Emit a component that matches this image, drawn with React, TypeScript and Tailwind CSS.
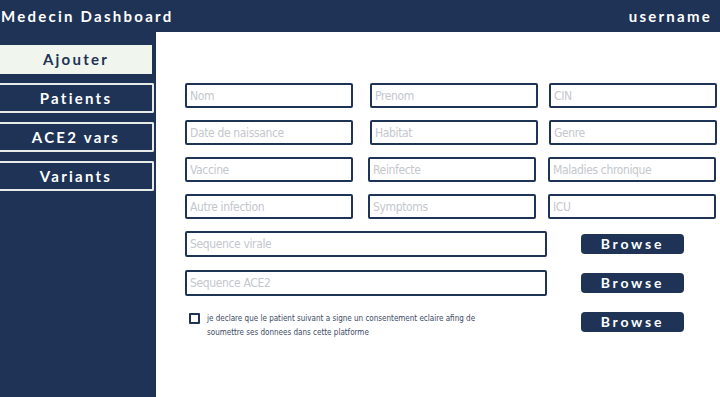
import { useState } from 'react'

const NAV = ['Patients', 'ACE2 vars', 'Variants']

const ROWS = [
  ['Nom', 'Prenom', 'CIN'],
  ['Date de naissance', 'Habitat', 'Genre'],
  ['Vaccine', 'Reinfecte', 'Maladies chronique'],
  ['Autre infection', 'Symptoms', 'ICU'],
]

const head = { fontFamily: 'Lato, "Open Sans", sans-serif' }
const narrow = { fontFamily: '"DejaVu Sans Condensed", "Liberation Sans Narrow", "Roboto Condensed", sans-serif' }

function Field({ ph, className = '' }: { ph: string; className?: string }) {
  return (
    <input
      placeholder={ph}
      style={narrow}
      className={`h-[25px] px-[3px] rounded-[2px] border-2 border-[#1e3355] text-[12px] tracking-[-0.03em] text-slate-700 placeholder:text-[#c4c7cc] outline-none ${className}`}
    />
  )
}

function Browse({ className = '' }: { className?: string }) {
  return (
    <button style={head} className={`block w-[103px] h-[20px] rounded-[4px] bg-[#1e3355] text-white text-[14px] font-bold tracking-[0.2em] leading-none ${className}`}>
      Browse
    </button>
  )
}

export default function App() {
  const [ok, setOk] = useState(false)
  return (
    <div className="w-[720px] h-[397px] bg-[#1e3355] flex flex-col overflow-hidden">
      <header style={head} className="h-[32px] shrink-0 flex items-center justify-between pl-[1px] pr-[8px] text-white font-bold text-[15px] tracking-[0.15em]">
        <span>Medecin Dashboard</span>
        <span>username</span>
      </header>
      <div className="flex flex-1">
        <aside style={head} className="w-[156px] shrink-0 pt-[13px] flex flex-col gap-[9px]">
          <button className="w-[152px] h-[29px] bg-[#f0f6ee] text-[#1e3355] font-bold text-[15px] tracking-[0.15em]">
            Ajouter
          </button>
          {NAV.map(n => (
            <button key={n} className="w-[154px] h-[30px] border-2 border-l-0 border-[#e8ece8] rounded-r-[2px] text-white font-bold text-[15px] tracking-[0.15em]">
              {n}
            </button>
          ))}
        </aside>
        <main className="flex-1 bg-white pl-[29px] pt-[51px]">
          <div className="flex flex-col gap-[12px]">
            {ROWS.map((r, i) => (
              <div key={i} className="flex">
                <Field ph={r[0]} className="w-[168px]" />
                <Field ph={r[1]} className={`w-[168px] ${i < 2 ? 'ml-[17px]' : 'ml-[15px]'}`} />
                <Field ph={r[2]} className={`w-[168px] ${i < 2 ? 'ml-[11px]' : 'ml-[12px]'}`} />
              </div>
            ))}
          </div>
          <div className="mt-[12px] flex items-start gap-[34px]">
            <Field ph="Sequence virale" className="w-[362px] h-[26px]" />
            <Browse className="mt-[3px]" />
          </div>
          <div className="mt-[13px] flex items-start gap-[34px]">
            <Field ph="Sequence ACE2" className="w-[362px] h-[26px]" />
            <Browse className="mt-[3px]" />
          </div>
          <div className="mt-[16px] flex items-start gap-[34px]">
            <div className="w-[362px] flex items-start">
              <button
                onClick={() => setOk(!ok)}
                className="ml-[4px] mt-[1px] w-[11px] h-[11px] border-2 border-[#1e3355] rounded-[1px] shrink-0"
              />
              <p style={narrow} className="ml-[7px] w-[280px] text-[8px] leading-[14px] text-[#3b4a63]">
                je declare que le patient suivant a signe un consentement eclaire afing de soumettre ses donnees dans cette platforme
              </p>
            </div>
            <Browse />
          </div>
        </main>
      </div>
    </div>
  )
}
